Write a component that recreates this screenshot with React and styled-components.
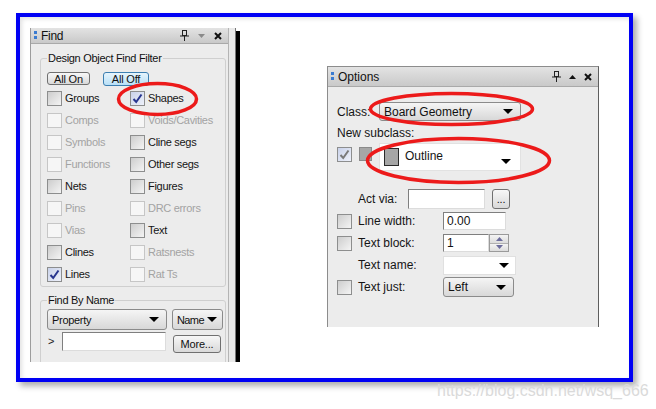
import React from 'react';
import styled, { createGlobalStyle } from 'styled-components';

const GlobalStyle = createGlobalStyle`
  body {
    margin: 0;
    background: #fff;
    font-family: "Liberation Sans", Arial, sans-serif;
  }
`;

const Page = styled.div`
  position: relative;
  width: 656px;
  height: 409px;
  overflow: hidden;
`;

const Frame = styled.div`
  margin: 13px 0 0 16px;
  width: 617px;
  height: 369px;
  box-sizing: border-box;
  border: 4px solid #0000f4;
  box-shadow: 4px 4px 6px rgba(0, 0, 0, 0.32), inset 2px 2px 4px rgba(0, 0, 0, 0.12);
  display: flex;
  align-items: flex-start;
  padding: 11px 0 0 10px;
  background: #fff;
`;

const Watermark = styled.div`
  margin: 0 0 0 437px;
  font-size: 16px;
  line-height: 18px;
  color: #dadada;
  white-space: nowrap;
`;

const Marks = styled.svg`
  position: absolute;
  left: 0;
  top: 0;
  pointer-events: none;
`;

/* ---------- shared bits ---------- */

const TitleBar = styled.div`
  height: ${(p) => p.$h}px;
  box-sizing: border-box;
  display: flex;
  align-items: center;
  padding: 0 6px 0 3px;
  background: linear-gradient(#e3e3e3, #c9c9c9);
  border-bottom: 1px solid #a9a9a9;
  font-size: 12px;
  color: #111;
  span { margin-left: 4px; }
`;

const TitleIcons = styled.div`
  margin-left: auto;
  display: flex;
  align-items: center;
  gap: ${(p) => p.$gap}px;
`;

const Box = styled.div`
  width: 15px;
  height: 15px;
  flex: none;
  box-sizing: border-box;
  display: flex;
  align-items: center;
  justify-content: center;
  border: 1px solid ${(p) => (p.$disabled ? '#c6c6c6' : '#8d8e8e')};
  background: ${(p) =>
    p.$disabled
      ? '#f6f6f6'
      : p.$checked
      ? 'linear-gradient(135deg, #c9d2ea, #eef1fa)'
      : 'linear-gradient(135deg, #cdcdcd, #f4f4f4)'};
`;

const Arrow = styled.i`
  width: 0;
  height: 0;
  flex: none;
  border-left: 5px solid transparent;
  border-right: 5px solid transparent;
  border-top: 5px solid ${(p) => p.$color || '#000'};
`;

const GraySelect = styled.div`
  width: ${(p) => p.$w}px;
  height: ${(p) => p.$h}px;
  box-sizing: border-box;
  flex: none;
  display: flex;
  align-items: center;
  justify-content: space-between;
  padding: 0 ${(p) => p.$pr || 7}px 0 4px;
  border: 1px solid #8b8b8b;
  border-radius: 3px;
  background: linear-gradient(#f5f5f5, #d8d8d8);
  color: #111;
  overflow: hidden;
  white-space: nowrap;
`;

const PushButton = styled.button`
  width: ${(p) => p.$w}px;
  height: ${(p) => p.$h}px;
  flex: none;
  box-sizing: border-box;
  padding: 0;
  font-family: inherit;
  font-size: 11px;
  letter-spacing: -0.2px;
  color: #111;
  border: 1px solid ${(p) => (p.$active ? '#3c7fb1' : '#707070')};
  border-radius: 3px;
  background: ${(p) =>
    p.$active ? 'linear-gradient(#e6f4fc, #b9e0f7)' : 'linear-gradient(#f7f7f7, #d9d9d9)'};
`;

const Field = styled.div`
  width: ${(p) => p.$w}px;
  height: ${(p) => p.$h}px;
  flex: none;
  box-sizing: border-box;
  display: flex;
  align-items: center;
  padding: 0 3px;
  background: #fff;
  border: 1px solid;
  border-color: #7f7f7f #dcdcdc #dcdcdc #7f7f7f;
  color: #111;
`;

function Grip() {
  return (
    <svg width="3" height="9" viewBox="0 0 3 9">
      <rect x="0" y="0" width="3" height="3" fill="#3b7bd0" />
      <rect x="0" y="5" width="3" height="3" fill="#3b7bd0" />
    </svg>
  );
}

function Pin() {
  return (
    <svg width="9" height="11" viewBox="0 0 9 11">
      <rect x="2.5" y="0.5" width="4" height="5" fill="none" stroke="#222" />
      <line x1="0" y1="6" x2="9" y2="6" stroke="#222" />
      <line x1="4.5" y1="6" x2="4.5" y2="11" stroke="#222" />
    </svg>
  );
}

function Tri({ up, color }) {
  return (
    <svg width="7" height="4" viewBox="0 0 7 4">
      <path d={up ? 'M0 4 L3.5 0 L7 4 Z' : 'M0 0 L3.5 4 L7 0 Z'} fill={color} />
    </svg>
  );
}

function Close() {
  return (
    <svg width="8" height="8" viewBox="0 0 8 8">
      <path d="M1 1 L7 7 M7 1 L1 7" stroke="#111" strokeWidth="2" />
    </svg>
  );
}

function Check({ color }) {
  return (
    <svg width="11" height="11" viewBox="0 0 11 11">
      <path d="M1.5 6 L4.2 9 L9.5 1.5" fill="none" stroke={color} strokeWidth="2" />
    </svg>
  );
}

/* ---------- Find panel ---------- */

const FindShot = styled.div`
  display: flex;
  height: 334px;
  flex: none;
`;

const FindPanel = styled.div`
  width: 199px;
  height: 334px;
  box-sizing: border-box;
  background: #ececec;
  border-left: 1px solid #9c9c9c;
  border-right: 1px solid #b4b4b4;
  overflow: hidden;
  font-size: 11px;
  letter-spacing: -0.3px;
`;

const Gutter = styled.div`
  width: 6px;
  background: #e9e9e9;
  border-right: 1px solid #777;
`;

const Edge = styled.div`
  width: 4px;
  margin-top: 3px;
  background: #000;
`;

const FindBody = styled.div`
  padding: 0 2px 0 9px;
`;

const GroupBox = styled.fieldset`
  margin: ${(p) => p.$top}px 0 0 0;
  padding: ${(p) => p.$pad}px 0 0 6px;
  min-inline-size: 0;
  height: ${(p) => p.$h}px;
  border: 1px solid #cfcfcf;
  border-radius: 3px;
  box-sizing: border-box;
`;

const Legend = styled.legend`
  padding: 0 1px;
  font-size: 11px;
  line-height: 14px;
  color: #111;
`;

const ButtonRow = styled.div`
  display: flex;
  gap: 13px;
`;

const CheckGrid = styled.div`
  display: grid;
  grid-template-columns: 83px 1fr;
  grid-auto-rows: 22px;
  margin-top: 1px;
`;

const CheckItem = styled.div`
  display: flex;
  align-items: center;
  gap: 3px;
  color: ${(p) => (p.$disabled ? '#a3a3a3' : '#151515')};
  white-space: nowrap;
`;

const NameRow = styled.div`
  display: flex;
  gap: 5px;
`;

const SearchRow = styled.div`
  display: flex;
  align-items: flex-start;
  margin-top: 2px;
`;

const Chevron = styled.span`
  width: 14px;
  line-height: 19px;
  padding-left: 1px;
  color: #222;
`;

const Tight = styled.span`
  letter-spacing: -0.6px;
`;

const filters = [
  ['Groups', false, false, 'Shapes', false, true],
  ['Comps', true, false, 'Voids/Cavities', true, false],
  ['Symbols', true, false, 'Cline segs', false, false],
  ['Functions', true, false, 'Other segs', false, false],
  ['Nets', false, false, 'Figures', false, false],
  ['Pins', true, false, 'DRC errors', true, false],
  ['Vias', true, false, 'Text', false, false],
  ['Clines', false, false, 'Ratsnests', true, false],
  ['Lines', false, true, 'Rat Ts', true, false],
];

function Filter({ label, disabled, checked }) {
  return (
    <CheckItem $disabled={disabled}>
      <Box $disabled={disabled} $checked={checked}>
        {checked && <Check color="#27358f" />}
      </Box>
      {label}
    </CheckItem>
  );
}

function Find() {
  return (
    <FindShot>
      <FindPanel>
        <TitleBar $h={16}>
          <Grip />
          <span>Find</span>
          <TitleIcons $gap={9}>
            <Pin />
            <Tri color="#8a8a8a" />
            <Close />
          </TitleIcons>
        </TitleBar>
        <FindBody>
          <GroupBox $top={7} $pad={7} $h={236}>
            <Legend>Design Object Find Filter</Legend>
            <ButtonRow>
              <PushButton $w={43} $h={13}>All On</PushButton>
              <PushButton $w={46} $h={14} $active>All Off</PushButton>
            </ButtonRow>
            <CheckGrid>
              {filters.map((r) => (
                <React.Fragment key={r[0]}>
                  <Filter label={r[0]} disabled={r[1]} checked={r[2]} />
                  <Filter label={r[3]} disabled={r[4]} checked={r[5]} />
                </React.Fragment>
              ))}
            </CheckGrid>
          </GroupBox>
          <GroupBox $top={6} $pad={2} $h={90}>
            <Legend>Find By Name</Legend>
            <NameRow>
              <GraySelect $w={120} $h={21}>
                Property <Arrow />
              </GraySelect>
              <GraySelect $w={51} $h={21} $pr={5}>
                <Tight>Name</Tight>
                <Arrow />
              </GraySelect>
            </NameRow>
            <SearchRow>
              <Chevron>&gt;</Chevron>
              <Field $w={104} $h={19} />
              <PushButton $w={48} $h={18} style={{ marginLeft: 7, marginTop: 3 }}>
                More...
              </PushButton>
            </SearchRow>
          </GroupBox>
        </FindBody>
      </FindPanel>
      <Gutter />
      <Edge />
    </FindShot>
  );
}

/* ---------- Options panel ---------- */

const OptionsPanel = styled.div`
  width: 272px;
  height: 261px;
  margin: 38px 0 0 87px;
  flex: none;
  box-sizing: border-box;
  background: #ececec;
  border: 1px solid #8c8c8c;
  border-right-color: #5e5e5e;
  border-bottom: none;
  font-size: 12px;
  color: #151515;
`;

const OptBody = styled.div`
  padding: 15px 0 0 9px;
`;

const ClassRow = styled.div`
  display: flex;
  align-items: center;
  height: 19px;
`;

const Label = styled.span`
  width: ${(p) => p.$w}px;
  flex: none;
  white-space: nowrap;
`;

const SubLabel = styled.div`
  margin-top: 5px;
  line-height: 14px;
`;

const SubRow = styled.div`
  display: flex;
  align-items: flex-start;
  margin-top: 3px;
  height: 28px;
`;

const Swatch = styled.div`
  width: ${(p) => p.$w}px;
  height: ${(p) => p.$h}px;
  flex: none;
  box-sizing: border-box;
  background: #a6a6a6;
  border: 1px solid ${(p) => p.$line};
`;

const SubSelect = styled.div`
  width: 142px;
  height: 28px;
  margin-left: 7px;
  box-sizing: border-box;
  display: flex;
  align-items: flex-start;
  padding: 4px 9px 0 4px;
  background: #fff;
  border: 1px solid #e2e2e2;
  span { margin: 1px 0 0 6px; flex: 1; }
  i { margin-top: 11px; }
`;

const FormRows = styled.div`
  margin-top: 17px;
`;

const FormRow = styled.div`
  display: flex;
  align-items: center;
  height: 22px;
  padding-left: ${(p) => p.$indent}px;
  & > ${Box} { margin-right: 6px; }
`;

const Spinner = styled.div`
  width: 20px;
  height: 18px;
  box-sizing: border-box;
  display: flex;
  flex-direction: column;
  border: 1px solid #9a9a9a;
  div {
    flex: 1;
    display: flex;
    align-items: center;
    justify-content: center;
    background: linear-gradient(#f4f4f4, #dcdcdc);
  }
  div + div { border-top: 1px solid #b0b0b0; }
`;

const WhiteSelect = styled.div`
  width: 73px;
  height: 19px;
  box-sizing: border-box;
  display: flex;
  align-items: center;
  justify-content: flex-end;
  padding-right: 6px;
  background: #fff;
  border: 1px solid #e0e0e0;
`;

function Options() {
  return (
    <OptionsPanel>
      <TitleBar $h={20}>
        <Grip />
        <span>Options</span>
        <TitleIcons $gap={8}>
          <Pin />
          <Tri up color="#111" />
          <Close />
        </TitleIcons>
      </TitleBar>
      <OptBody>
        <ClassRow>
          <Label $w={42}>Class:</Label>
          <GraySelect $w={142} $h={19}>
            Board Geometry <Arrow />
          </GraySelect>
        </ClassRow>
        <SubLabel>New subclass:</SubLabel>
        <SubRow>
          <Box $checked style={{ marginTop: 4 }}>
            <Check color="#7a7a7a" />
          </Box>
          <Swatch $w={13} $h={14} $line="#8a8a8a" style={{ marginLeft: 7, marginTop: 4 }} />
          <SubSelect>
            <Swatch $w={15} $h={18} $line="#2a2a2a" />
            <span>Outline</span>
            <Arrow />
          </SubSelect>
        </SubRow>
        <FormRows>
          <FormRow $indent={21}>
            <Label $w={50}>Act via:</Label>
            <Field $w={77} $h={20} />
            <PushButton $w={18} $h={20} style={{ marginLeft: 7 }}>...</PushButton>
          </FormRow>
          <FormRow $indent={0}>
            <Box />
            <Label $w={85}>Line width:</Label>
            <Field $w={63} $h={18}>0.00</Field>
          </FormRow>
          <FormRow $indent={0}>
            <Box />
            <Label $w={85}>Text block:</Label>
            <Field $w={46} $h={18}>1</Field>
            <Spinner>
              <div><Tri up color="#6c6c9c" /></div>
              <div><Tri color="#6c6c9c" /></div>
            </Spinner>
          </FormRow>
          <FormRow $indent={21}>
            <Label $w={85}>Text name:</Label>
            <WhiteSelect><Arrow /></WhiteSelect>
          </FormRow>
          <FormRow $indent={0}>
            <Box />
            <Label $w={85}>Text just:</Label>
            <GraySelect $w={71} $h={20}>
              Left <Arrow />
            </GraySelect>
          </FormRow>
        </FormRows>
      </OptBody>
    </OptionsPanel>
  );
}

export default function App() {
  return (
    <Page>
      <GlobalStyle />
      <Frame>
        <Find />
        <Options />
      </Frame>
      <Watermark>https://blog.csdn.net/wsq_666</Watermark>
      <Marks width="656" height="409" viewBox="0 0 656 409">
        <g fill="none" stroke="#ec1a1a" strokeWidth="3.5">
          <ellipse cx="157.5" cy="99" rx="39" ry="15.5" />
          <ellipse cx="451.5" cy="109" rx="81" ry="15.5" />
          <ellipse cx="458.5" cy="160.5" rx="91" ry="22" />
        </g>
      </Marks>
    </Page>
  );
}
